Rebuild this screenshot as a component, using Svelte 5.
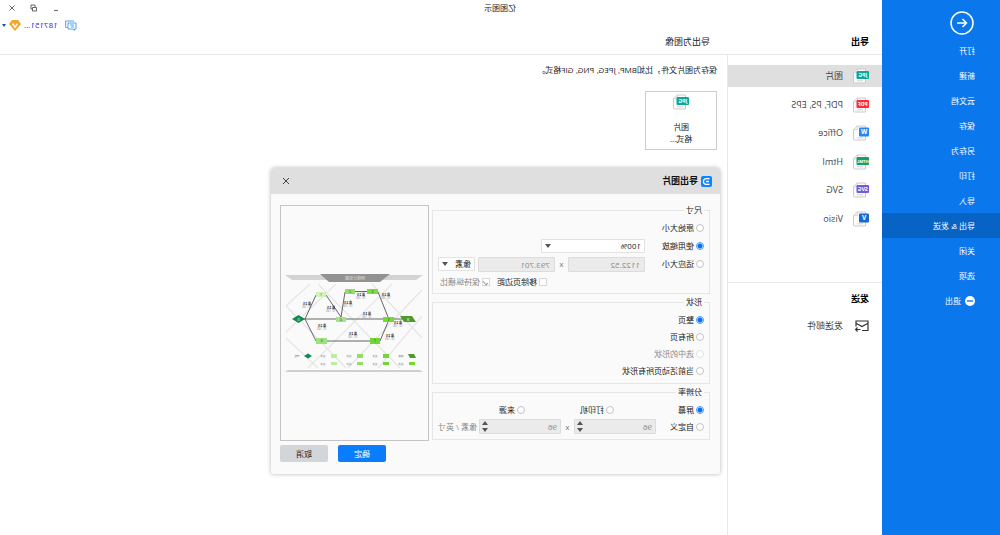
<script>
  const menu = ['打开', '新建', '云文档', '保存', '另存为', '打印', '导入', '导出 & 发送', '关闭', '选项'];
  const activeMenu = '导出 & 发送';

  const formats = [
    { name: '图片', tag: 'JPG', color: '#0fa898' },
    { name: 'PDF, PS, EPS', tag: 'PDF', color: '#fb2b37' },
    { name: 'Office', tag: 'W', color: '#2a86f7' },
    { name: 'Html', tag: 'HTML', color: '#139f68' },
    { name: 'SVG', tag: 'SVG', color: '#7558dc' },
    { name: 'Visio', tag: 'V', color: '#1b66d2' }
  ];

  let sizeMode = $state('scale');
  let shapeMode = $state('page');
  let dpiMode = $state('screen');

  const shapes = [
    { value: 'page', label: '整页' },
    { value: 'all', label: '所有页' },
    { value: 'selected', label: '选中的形状', disabled: true },
    { value: 'current', label: '当前活动页所有形状' }
  ];

  // preview diagram
  const nodes = [
    { x: 102, y: 86, w: 10, h: 5, c: '#cdf3bb', n: '1' },
    { x: 73, y: 83, w: 10, h: 5, c: '#92df68', n: '2' },
    { x: 50, y: 83, w: 11, h: 5, c: '#7bdc3c', n: '3' },
    { x: 82, y: 111, w: 10, h: 5, c: '#a3e486', n: '4' },
    { x: 34, y: 111, w: 11, h: 5, c: '#72dc30', n: '5' },
    { x: 101, y: 132, w: 11, h: 6, c: '#9be37a', n: '6' },
    { x: 48, y: 132, w: 10, h: 6, c: '#72d736', n: '7' }
  ];
  const notes = [[121, 99], [97, 103], [80, 98], [67, 90], [42, 90], [61, 109], [106, 121], [30, 118], [75, 129], [38, 131]];
  const legend = [
    { x: 94, c: '#b9eda0' },
    { x: 68, c: '#92df68' },
    { x: 42, c: '#72d736' }
  ];
</script>

{#snippet fileIcon(tag, color)}
  <svg class="file-icon" viewBox="0 0 16 16" aria-hidden="true">
    <path d="M3.5 1h8.2l3.8 3.7v9.3a1 1 0 0 1-1 1H3.5z" fill="#fcfcfc" stroke="#ccc" />
    <path d="M11.7 1v3.7h3.8M6 12.8h6" fill="none" stroke="#ccc" stroke-width=".8" />
    {#if tag.length === 1}
      <rect x="0" y="2.5" width="10" height="9" rx="1" fill={color} />
      <text x="5" y="9.4" font-size="6.5">{tag}</text>
    {:else}
      <rect x="0" y="3" width="12.5" height="8" rx="1" fill={color} />
      <text x="6.2" y="9" font-size={tag.length > 3 ? 4.2 : 5.2}>{tag}</text>
    {/if}
  </svg>
{/snippet}

<div class="app">
  <header class="titlebar">
    <span class="app-name">亿图图示</span>
    <div class="window-btns">
      <button aria-label="最小化"><svg viewBox="0 0 8 8"><path d="M2 6.5h4" /></svg></button>
      <button aria-label="还原"><svg viewBox="0 0 8 8"><path d="M1.5 3.5h4V7h-4zM3 3V1h4v4H5.5" /></svg></button>
      <button aria-label="关闭窗口"><svg viewBox="0 0 8 8"><path d="M1.5 1.5l5 5M6.5 1.5l-5 5" /></svg></button>
    </div>
  </header>

  <nav class="sidebar">
    <button class="back" aria-label="返回">
      <svg viewBox="0 0 24 24"><circle cx="12" cy="12" r="11" /><path d="M17 12H7.5M11.5 8l-4 4 4 4" /></svg>
    </button>
    {#each menu as item}
      <a href="#menu" class:active={item === activeMenu}>{item}</a>
    {/each}
    <a href="#menu">
      <svg class="exit" viewBox="0 0 10 10"><circle cx="5" cy="5" r="5" fill="#fff" /><path d="M2 5h6" stroke="#0a78ec" stroke-width="1.4" /></svg>
      退出
    </a>
  </nav>

  <div class="account">
    <svg class="chat" viewBox="0 0 12 11">
      <path d="M3 1h8.3v6.5H9.5M1 3h8v6H4l-1.5 1.3V9H1z" />
      <path d="M3 5h4M3 7h3" />
    </svg>
    <a href="#account">187151...</a>
    <svg class="gem" viewBox="0 0 12 11">
      <path d="M3 0h6l3 4-6 7-6-7z" fill="#f6a42b" />
      <path d="M3.5 3.5L6 7.2l2.5-3.7" fill="none" stroke="#fff" stroke-width="1.5" />
    </svg>
    <span class="caret blue"></span>
  </div>

  <h2 class="col-title">导出</h2>
  <h1 class="page-title">导出为图像</h1>

  <section class="types">
    <ul class="formats">
      {#each formats as f, i}
        <li>
          <a href="#format" class:selected={i === 0}>{@render fileIcon(f.tag, f.color)}{f.name}</a>
        </li>
      {/each}
    </ul>
    <div class="send">
      <h2>发送</h2>
      <a href="#mail">
        <svg viewBox="0 0 14 12">
          <path d="M7 10.5H1V1h12v5.5M1.5 3.5l5.5 3 5.5-3M8.5 9.5h5M11.500 7.5l2 2-2 2" />
        </svg>
        发送邮件
      </a>
    </div>
  </section>

  <main>
    <p>保存为图片文件，比如BMP, JPEG, PNG, GIF格式。</p>
    <button class="tile">
      {@render fileIcon('JPG', '#0fa898')}
      <span>图片<br />格式...</span>
    </button>
  </main>

  <div class="dialog" role="dialog" aria-labelledby="dialog-title">
    <header>
      <svg class="logo" viewBox="0 0 11 11">
        <rect width="11" height="11" rx="2" fill="#0d84fa" />
        <path d="M2.5 2.7h3.3a2.8 2.8 0 0 1 0 5.6H2.500M3 5.500h3" fill="none" stroke="#fff" stroke-width="1.3" />
      </svg>
      <h3 id="dialog-title">导出图片</h3>
      <button class="close" aria-label="关闭"><svg viewBox="0 0 8 8"><path d="M1 1l6 6M7 1L1 7" /></svg></button>
    </header>

    <form class="body" onsubmit={(e) => e.preventDefault()}>
      <div class="options">
        <fieldset class="size">
          <legend>尺寸</legend>
          <div class="row">
            <label><input type="radio" value="original" bind:group={sizeMode} />原始大小</label>
          </div>
          <div class="row">
            <label><input type="radio" value="scale" bind:group={sizeMode} />使用缩放</label>
            <span class="select scale">
              <select aria-label="缩放"><option>100%</option><option>200%</option></select>
              <span class="caret"></span>
            </span>
          </div>
          <div class="row">
            <label><input type="radio" value="fit" bind:group={sizeMode} />适应大小</label>
            <input class="num" type="text" value="1122.52" aria-label="宽度" disabled />
            <span class="times">x</span>
            <input class="num" type="text" value="793.701" aria-label="高度" disabled />
            <span class="select unit">
              <select aria-label="单位"><option>像素</option><option>毫米</option></select>
              <span class="caret"></span>
            </span>
          </div>
          <div class="row checks">
            <label><input type="checkbox" />移除页边距</label>
            <label class="off"><input type="checkbox" checked disabled />保持纵横比</label>
          </div>
        </fieldset>

        <fieldset class="shape">
          <legend>形状</legend>
          {#each shapes as s}
            <div class="row">
              <label class:off={s.disabled}>
                <input type="radio" value={s.value} disabled={s.disabled} bind:group={shapeMode} />{s.label}
              </label>
            </div>
          {/each}
        </fieldset>

        <fieldset class="dpi">
          <legend>分辨率</legend>
          <div class="row modes">
            <label><input type="radio" value="screen" bind:group={dpiMode} />屏幕</label>
            <label><input type="radio" value="printer" bind:group={dpiMode} />打印机</label>
            <label><input type="radio" value="source" bind:group={dpiMode} />来源</label>
          </div>
          <div class="row">
            <label><input type="radio" value="custom" bind:group={dpiMode} />自定义</label>
            <span class="spin">
              <input type="text" value="96" aria-label="水平分辨率" disabled />
              <span class="arrows"><i class="up"></i><i class="caret"></i></span>
            </span>
            <span class="times">x</span>
            <span class="spin">
              <input type="text" value="96" aria-label="垂直分辨率" disabled />
              <span class="arrows"><i class="up"></i><i class="caret"></i></span>
            </span>
            <span class="per">像素 / 英寸</span>
          </div>
        </fieldset>
      </div>

      <div class="preview">
        <svg viewBox="0 0 147 234" role="img" aria-label="预览">
          <path class="grid" d="M6 84l74 78M36 78l84 84M92 78l50 48M6 132l50-54M28 162l82-84M82 162l60-62M6 110l44 52M118 78l24 22M110 162l32-30" />
          <path d="M5 69h138l-7 5H12z" fill="#d3d3d3" />
          <path d="M38 68h70l-9 8H48z" fill="#929292" />
          <text x="73" y="73.5" class="heading">网络计划图</text>
          <path class="link" d="M20 113h109M123 113l-11-24M102 89l-15 22-4-25M73 85.5H61M50 86l-10 25M123 113l-11 22H58M48 135l-8-19" />
          {#each nodes as n}
            <rect x={n.x} y={n.y} width={n.w} height={n.h} fill={n.c} />
            <text x={n.x + n.w / 2} y={n.y + 4} class="node">{n.n}</text>
          {/each}
          <path d="M16 110h12l-4 6H12z" fill="#4f9a2c" />
          <text x="20" y="114.5" class="node light">8</text>
          <path d="M123 113l6.5-4 6.5 4-6.5 4z" fill="#128a53" />
          <text x="129.5" y="114.5" class="node light">0</text>
          {#each notes as [x, y]}
            <text {x} {y} class="note">最 2.5</text>
            <text {x} y={y + 3} class="note thin">10 - 100</text>
          {/each}
          <path d="M116 150l4-2.5 4 2.5-4 2.5z" fill="#128a53" />
          <text x="131" y="151" class="note thin">开始</text>
          {#each legend as l}
            <rect x={l.x - 3} y="148" width="6" height="4" fill={l.c} />
            <rect x={l.x - 3} y="156" width="6" height="3" fill={l.c} />
            <text x={l.x + 11} y="151" class="note thin">任务</text>
            <text x={l.x + 11} y="159" class="note thin">任务</text>
          {/each}
          <path d="M14 148h6l-2 4h-6z" fill="#4f9a2c" />
          <rect x="13" y="156" width="6" height="3" fill="#72dc30" />
          <text x="27" y="151" class="note thin">结束</text>
          <text x="27" y="159" class="note thin">任务</text>
          <path d="M8 164h132l3 2H5z" fill="#cfcfcf" />
        </svg>
      </div>

      <footer>
        <button type="submit" class="primary">确定</button>
        <button type="button">取消</button>
      </footer>
    </form>
  </div>
</div>

<style>
  :global(body) { margin: 0; overflow-x: hidden; background: #fff; }

  /* whole window is shown flipped */
  .app {
    position: relative;
    display: grid;
    grid-template-columns: 118px 155px 1fr;
    grid-template-rows: 16px 18px 21px 1fr;
    min-height: 100vh;
    transform: scaleX(-1);
    background: #fff;
    color: #222;
    font: 8px/12px "Open Sans", "Noto Sans CJK SC", sans-serif;
  }
  h1, h2, h3, p, ul { margin: 0; padding: 0; list-style: none; }
  button, input, select { margin: 0; padding: 0; border: 0; font: inherit; color: inherit; box-sizing: border-box; background: none; border-radius: 0; }
  a { color: inherit; text-decoration: none; }
  svg { display: block; flex: none; }

  .titlebar { grid-area: 1 / 1 / 2 / 4; display: grid; grid-template-columns: 1fr auto 1fr; align-items: center; }
  .app-name { grid-column: 2; }
  .window-btns { display: flex; justify-content: flex-end; padding-right: 1px; }
  .window-btns button { display: grid; place-items: center; width: 22px; height: 14px; }
  .window-btns svg { width: 8px; height: 8px; fill: none; stroke: #555; stroke-width: .9; }

  .sidebar { grid-area: 1 / 1 / 5 / 2; z-index: 1; background: #0a78ec; color: #fff; }
  .back { display: block; width: 24px; height: 24px; margin: 11px 0 3px 26px; }
  .back svg { width: 24px; height: 24px; fill: none; stroke: #fff; stroke-width: 1.5; }
  .sidebar a { display: flex; align-items: center; gap: 4px; height: 25px; padding-left: 25px; }
  .sidebar a.active { background: #0864c4; }
  .exit { width: 10px; height: 10px; }

  .account { grid-area: 2 / 3 / 3 / 4; display: flex; justify-content: flex-end; align-items: center; gap: 3px; padding-right: 2px; }
  .account a { color: #2f22e8; margin-left: 4px; }
  .chat { width: 12px; height: 11px; fill: none; stroke: #3d97e8; stroke-width: .9; }
  .gem { width: 12px; height: 11px; }

  .caret { border: 3px solid transparent; border-top: 4px solid #555; border-bottom: 0; }
  .caret.blue { border-width: 3px 2px 0; border-top-color: #1d4fa8; }

  .col-title, .page-title { grid-row: 3; line-height: 16px; font-size: 9px; border-bottom: 1px solid #e8e8e8; }
  .col-title { grid-column: 2; padding-left: 13px; color: #000; }
  .page-title { grid-column: 3; padding-left: 17px; font-weight: 400; }

  .types { grid-area: 4 / 2; border-right: 1px solid #e8e8e8; font-size: 9px; color: #444; }
  .formats { display: flex; flex-direction: column; justify-content: space-between; height: 165px; padding: 10px 0 52px; border-bottom: 1px solid #e8e8e8; }
  .formats a { display: flex; align-items: center; gap: 10px; height: 22px; padding-left: 13px; }
  .formats a.selected { background: #dfdfdf; }
  .file-icon { width: 16px; height: 16px; }
  .file-icon text { fill: #fff; font-weight: 700; text-anchor: middle; }
  .send { padding: 10px 13px; }
  .send h2 { font-size: 9px; color: #000; }
  .send a { display: flex; align-items: center; gap: 12px; height: 16px; margin-top: 13px; }
  .send svg { width: 14px; height: 12px; fill: none; stroke: #333; stroke-width: 1.2; }

  main { grid-area: 4 / 3; padding: 9px 10px; }
  .tile { display: flex; flex-direction: column; align-items: center; gap: 11px; width: 72px; height: 59px; margin-top: 15px; padding-top: 2px; border: 1px solid #ccc; }

  .dialog { position: absolute; z-index: 2; left: 280px; top: 168px; width: 449px; border-radius: 4px 4px 2px 2px; background: #fafafa; box-shadow: 0 0 4px rgba(0, 0, 0, .3); }
  .dialog > header { display: flex; align-items: center; gap: 3px; height: 26px; padding: 0 11px 0 8px; border-radius: 4px 4px 0 0; background: #dfdfdf; }
  .logo { width: 11px; height: 11px; }
  h3 { font-size: 9px; color: #111; }
  .close { margin-left: auto; }
  .close svg { width: 8px; height: 8px; fill: none; stroke: #444; }

  .body { display: grid; grid-template-columns: minmax(0, 1fr) 149px; column-gap: 3px; padding: 11px 9px 12px 10px; }
  .options { display: flex; flex-direction: column; gap: 3px; }
  fieldset { min-width: 0; margin: 0; padding: 4px 3px 2px 5px; border: 1px solid #e6e6e6; }
  legend { padding: 0 2px; line-height: 10px; }
  .row { display: flex; align-items: center; height: 18px; }
  .shape, .dpi { padding: 4px 3px 4px 5px; }
  .shape .row, .dpi .row { height: 17px; }
  label { display: flex; align-items: center; gap: 2px; white-space: nowrap; }
  .row > label:first-child { min-width: 59px; }
  .off, .per { color: #888; }

  input[type="radio"] { appearance: none; width: 8px; height: 8px; border: 1px solid #c4c4c4; border-radius: 50%; background: #fff; }
  input[type="radio"]:checked { border-color: #4a9bf5; background: radial-gradient(circle, #0b6ff0 2px, #fff 3px); }
  input[type="radio"]:disabled { border-color: #e2e2e2; }
  input[type="checkbox"] { appearance: none; display: grid; place-items: center; width: 8px; height: 8px; border: 1px solid #d8d8d8; background: #fff; }
  input[type="checkbox"]:checked::after { content: ""; width: 2px; height: 4px; border: solid #999; border-width: 0 1px 1px 0; transform: rotate(40deg); }

  .select { position: relative; height: 14px; }
  .select select { appearance: none; display: block; width: 100%; height: 14px; padding-left: 3px; border: 1px solid #e2e2e2; border-radius: 1px; background: #fff; }
  .select .caret { position: absolute; right: 4px; top: 5px; }
  .scale { width: 104px; }
  .unit { width: 37px; margin-left: 3px; }
  .num { width: 77px; height: 15px; padding-left: 4px; border: 1px solid #dcdcdc; border-radius: 1px; background: #ebebeb; color: #888; }
  .times { width: 13px; text-align: center; color: #777; }
  .checks { justify-content: flex-end; gap: 7px; padding-right: 4px; }
  .checks > label:first-child { min-width: 0; }

  .dpi .row > label:first-child { min-width: 48px; }
  .dpi .modes > label:first-child { min-width: 90px; }
  .modes > label + label { min-width: 89px; }
  .spin { display: flex; align-items: center; width: 82px; height: 15px; box-sizing: border-box; border: 1px solid #dcdcdc; border-radius: 1px; background: #ebebeb; }
  .spin input { flex: 1; min-width: 0; padding-left: 3px; color: #888; }
  .arrows { display: flex; flex-direction: column; gap: 3px; padding-right: 2px; }
  .up { border: 3px solid transparent; border-bottom: 4px solid #555; border-top: 0; }
  .per { margin-left: 2px; white-space: nowrap; }

  .preview { border: 1px solid #c4c4c4; }
  .preview svg { width: 100%; }
  .preview text { text-anchor: middle; }
  .grid { fill: none; stroke: #e6e6e6; stroke-width: 1.2; }
  .link { fill: none; stroke: #555; stroke-width: .9; }
  .preview .heading { fill: #ddd; font-size: 4px; }
  .node { fill: #355; font-size: 4px; }
  .light { fill: #fff; }
  .note { fill: #222; font-size: 3px; font-weight: 700; }
  .thin { fill: #777; font-size: 2.6px; font-weight: 400; }

  footer { grid-column: 1 / -1; display: flex; justify-content: flex-end; gap: 10px; padding-top: 4px; }
  footer button { width: 48px; height: 17px; border-radius: 2px; background: #d2d5da; }
  footer .primary { background: #0a7dfd; color: #fff; }
</style>
